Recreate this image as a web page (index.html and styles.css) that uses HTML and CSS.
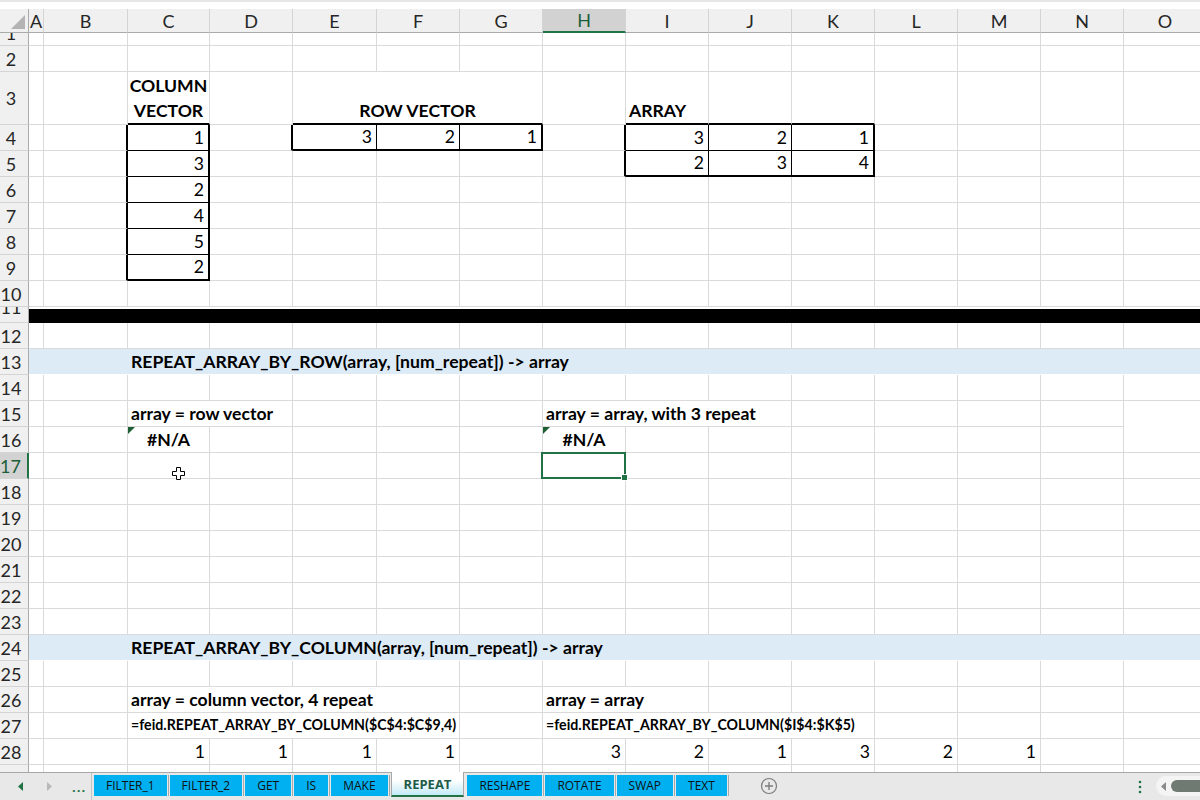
FILE: index.html
```html
<!DOCTYPE html>
<html lang="en">
<head>
  <meta charset="UTF-8" />
  <title>REPEAT - feid</title>
  <link rel="stylesheet" href="styles.css">
</head>
<body>

<div class="window">
  <div class="topstrip"></div>

  <div class="sheet">
    <div class="row colhead">
      <div class="corner"><svg width="16" height="16" viewBox="0 0 16 16"><polygon points="15,1 15,15 1,15" fill="#b4b4b4"/></svg></div>
      <div>A</div><div>B</div><div>C</div><div>D</div><div>E</div><div>F</div><div>G</div>
      <div class="on">H</div><div>I</div><div>J</div><div>K</div><div>L</div><div>M</div><div>N</div><div>O</div>
    </div>

    <div class="row r-thin"><div class="h cut">1</div><div></div><div></div><div></div><div></div><div></div><div></div><div></div><div></div><div></div><div></div><div></div><div></div><div></div><div></div><div></div></div>
    <div class="row"><div class="h">2</div><div></div><div></div><div></div><div></div><div></div><div></div><div></div><div></div><div></div><div></div><div></div><div></div><div></div><div></div><div></div></div>
    <div class="row r-tall">
      <div class="h">3</div><div></div><div></div>
      <div class="t mid wrap bb">COLUMN VECTOR</div>
      <div></div>
      <div class="t mid span3 bb">ROW VECTOR</div>
      <div></div>
      <div class="t bb">ARRAY</div><div class="bb"></div><div class="bb"></div>
      <div></div><div></div><div></div><div></div>
    </div>
    <div class="row">
      <div class="h">4</div><div></div><div class="rb"></div>
      <div class="n rb b1">1</div>
      <div class="rb"></div>
      <div class="n r1 bb">3</div><div class="n r1 bb">2</div><div class="n rb bb">1</div>
      <div class="rb"></div>
      <div class="n r1 b1">3</div><div class="n r1 b1">2</div><div class="n rb b1">1</div>
      <div></div><div></div><div></div><div></div>
    </div>
    <div class="row">
      <div class="h">5</div><div></div><div class="rb"></div>
      <div class="n rb b1">3</div>
      <div></div><div></div><div></div><div></div>
      <div class="rb"></div>
      <div class="n r1 bb">2</div><div class="n r1 bb">3</div><div class="n rb bb">4</div>
      <div></div><div></div><div></div><div></div>
    </div>
    <div class="row"><div class="h">6</div><div></div><div class="rb"></div><div class="n rb b1">2</div><div></div><div></div><div></div><div></div><div></div><div></div><div></div><div></div><div></div><div></div><div></div><div></div></div>
    <div class="row"><div class="h">7</div><div></div><div class="rb"></div><div class="n rb b1">4</div><div></div><div></div><div></div><div></div><div></div><div></div><div></div><div></div><div></div><div></div><div></div><div></div></div>
    <div class="row"><div class="h">8</div><div></div><div class="rb"></div><div class="n rb b1">5</div><div></div><div></div><div></div><div></div><div></div><div></div><div></div><div></div><div></div><div></div><div></div><div></div></div>
    <div class="row"><div class="h">9</div><div></div><div class="rb"></div><div class="n rb bb">2</div><div></div><div></div><div></div><div></div><div></div><div></div><div></div><div></div><div></div><div></div><div></div><div></div></div>
    <div class="row"><div class="h">10</div><div></div><div></div><div></div><div></div><div></div><div></div><div></div><div></div><div></div><div></div><div></div><div></div><div></div><div></div><div></div></div>

    <div class="row r-band"><div class="h cut">11</div><div class="band"></div></div>

    <div class="row"><div class="h">12</div><div></div><div></div><div></div><div></div><div></div><div></div><div></div><div></div><div></div><div></div><div></div><div></div><div></div><div></div><div></div></div>
    <div class="row"><div class="h">13</div><div class="title">REPEAT_ARRAY_BY_ROW(array, [num_repeat]) -&gt; array</div></div>
    <div class="row"><div class="h">14</div><div></div><div></div><div></div><div></div><div></div><div></div><div></div><div></div><div></div><div></div><div></div><div></div><div></div><div></div><div></div></div>
    <div class="row">
      <div class="h">15</div><div></div><div></div>
      <div class="t span2">array = row vector</div>
      <div></div><div></div><div></div>
      <div class="t span3">array = array, with 3 repeat</div>
      <div></div><div></div><div></div><div></div>
    </div>
    <div class="row">
      <div class="h">16</div><div></div><div></div>
      <div class="t mid err">#N/A</div>
      <div></div><div></div><div></div><div></div>
      <div class="t mid err">#N/A</div>
      <div></div><div></div><div></div><div></div><div></div><div></div><div></div>
    </div>
    <div class="row">
      <div class="h on">17</div><div></div><div></div>
      <div class="pointer">
        <svg class="cursor" width="13" height="13" viewBox="0 0 13 13"><path d="M4.5 0.5h4v4h4v4h-4v4h-4v-4h-4v-4h4z" fill="#fff" stroke="#000"/></svg>
      </div>
      <div></div><div></div><div></div><div></div>
      <div class="sel"></div>
      <div></div><div></div><div></div><div></div><div></div><div></div><div></div>
    </div>
    <div class="row"><div class="h">18</div><div></div><div></div><div></div><div></div><div></div><div></div><div></div><div></div><div></div><div></div><div></div><div></div><div></div><div></div><div></div></div>
    <div class="row"><div class="h">19</div><div></div><div></div><div></div><div></div><div></div><div></div><div></div><div></div><div></div><div></div><div></div><div></div><div></div><div></div><div></div></div>
    <div class="row"><div class="h">20</div><div></div><div></div><div></div><div></div><div></div><div></div><div></div><div></div><div></div><div></div><div></div><div></div><div></div><div></div><div></div></div>
    <div class="row"><div class="h">21</div><div></div><div></div><div></div><div></div><div></div><div></div><div></div><div></div><div></div><div></div><div></div><div></div><div></div><div></div><div></div></div>
    <div class="row"><div class="h">22</div><div></div><div></div><div></div><div></div><div></div><div></div><div></div><div></div><div></div><div></div><div></div><div></div><div></div><div></div><div></div></div>
    <div class="row"><div class="h">23</div><div></div><div></div><div></div><div></div><div></div><div></div><div></div><div></div><div></div><div></div><div></div><div></div><div></div><div></div><div></div></div>
    <div class="row"><div class="h">24</div><div class="title">REPEAT_ARRAY_BY_COLUMN(array, [num_repeat]) -&gt; array</div></div>
    <div class="row"><div class="h">25</div><div></div><div></div><div></div><div></div><div></div><div></div><div></div><div></div><div></div><div></div><div></div><div></div><div></div><div></div><div></div></div>
    <div class="row">
      <div class="h">26</div><div></div><div></div>
      <div class="t span4">array = column vector, 4 repeat</div>
      <div></div>
      <div class="t span2">array = array</div>
      <div></div><div></div><div></div><div></div><div></div><div></div>
    </div>
    <div class="row">
      <div class="h">27</div><div></div><div></div>
      <div class="t f span4">=feid.REPEAT_ARRAY_BY_COLUMN($C$4:$C$9,4)</div>
      <div></div>
      <div class="t f span4">=feid.REPEAT_ARRAY_BY_COLUMN($I$4:$K$5)</div>
      <div></div><div></div><div></div><div></div>
    </div>
    <div class="row">
      <div class="h">28</div><div></div><div></div>
      <div class="n">1</div><div class="n">1</div><div class="n">1</div><div class="n">1</div>
      <div></div>
      <div class="n">3</div><div class="n">2</div><div class="n">1</div><div class="n">3</div><div class="n">2</div><div class="n">1</div>
      <div></div><div></div>
    </div>
    <div class="row"><div class="h">29</div><div></div><div></div><div></div><div></div><div></div><div></div><div></div><div></div><div></div><div></div><div></div><div></div><div></div><div></div><div></div></div>
  </div>

  <div class="tabbar">
    <div class="nav">
      <svg width="6" height="9" viewBox="0 0 6 9"><polygon points="5,0 5,9 0,4.5" fill="#217346"/></svg>
      <svg width="6" height="9" viewBox="0 0 6 9"><polygon points="0,0 0,9 5,4.5" fill="#b9b9b9"/></svg>
      <span class="more">...</span>
    </div>
    <div class="tabs">
      <div class="tab">FILTER_1</div>
      <div class="tab">FILTER_2</div>
      <div class="tab">GET</div>
      <div class="tab">IS</div>
      <div class="tab">MAKE</div>
      <div class="tab active">REPEAT</div>
      <div class="tab">RESHAPE</div>
      <div class="tab">ROTATE</div>
      <div class="tab">SWAP</div>
      <div class="tab">TEXT</div>
    </div>
    <div class="add">
      <svg width="18" height="18" viewBox="0 0 18 18"><circle cx="9" cy="9" r="7.5" fill="none" stroke="#7b7b7b" stroke-width="1.2"/><path d="M9 5v8M5 9h8" stroke="#7b7b7b" stroke-width="1.3"/></svg>
    </div>
    <div class="spacer"></div>
    <div class="dots">
      <svg width="4" height="14" viewBox="0 0 4 14"><circle cx="2" cy="2" r="1.3" fill="#217346"/><circle cx="2" cy="7" r="1.3" fill="#217346"/><circle cx="2" cy="12" r="1.3" fill="#217346"/></svg>
    </div>
    <div class="hscroll">
      <svg width="6" height="9" viewBox="0 0 6 9"><polygon points="5,0 5,9 0,4.5" fill="#8a8a8a"/></svg>
      <div class="thumb"></div>
    </div>
  </div>
</div>

</body>
</html>
```

FILE: styles.css
```css
body {
  margin: 0;
  background: #ffffff;
  font-family: Lato, 'Liberation Sans', sans-serif;
  color: #000;
}

.window {
  width: 1200px;
  height: 800px;
  display: flex;
  flex-direction: column;
  overflow: hidden;
}

.topstrip {
  height: 9px;
  flex: none;
  background: #ffffff;
  border-top: 2px solid #e6e6e6;
  box-sizing: border-box;
}

.sheet {
  height: 763px;
  flex: none;
  overflow: hidden;
}

/* one spreadsheet row: row header + columns A..O */
.row {
  display: grid;
  grid-template-columns: 29px 15px 84px 82px 83px 84px 83px 83px 83px 83px 83px 83px 83px 83px 83px 83px;
  height: 26px;
}

.row > div {
  box-sizing: border-box;
  border-right: 1px solid #dadada;
  border-bottom: 1px solid #dadada;
  display: flex;
  align-items: flex-end;
  min-width: 0;
  white-space: nowrap;
  font-size: 17.6px;
  line-height: 20px;
  padding-bottom: 2px;
}

.r-thin { height: 13px; }
.r-tall { height: 53px; }
.r-band { height: 16px; }

/* column letters */
.colhead {
  height: 24px;
}

.colhead > div {
  background: #f0f0f0;
  border-right: 1px solid #d4d4d4;
  border-bottom: 1px solid #ababab;
  justify-content: center;
  align-items: center;
  padding-bottom: 0;
  font-size: 18px;
  color: #262626;
}

.colhead > .corner {
  justify-content: flex-end;
  align-items: flex-end;
  padding: 0 2px 2px 0;
  border-right-color: #ababab;
}

.colhead > .on {
  background: #d2d2d2;
  border-bottom: 2px solid #217346;
  color: #1b5e3a;
}

/* row numbers */
.row > .h {
  background: #f0f0f0;
  border-right: 1px solid #ababab;
  border-bottom: 1px solid #d4d4d4;
  justify-content: center;
  align-items: center;
  padding: 0 6px 0 0;
  font-size: 18px;
  color: #262626;
  overflow: hidden;
}

.row > .h.cut {
  align-items: flex-start;
  line-height: 1px;
}

.row > .h.on {
  background: #d2d2d2;
  border-right: 2px solid #217346;
  color: #1b5e3a;
}

/* cell content */
.n {
  justify-content: flex-end;
  padding-right: 4px;
}

.t {
  font-weight: bold;
  padding-left: 3px;
}

.mid {
  justify-content: center;
  padding-left: 0;
  text-align: center;
}

.row > .wrap {
  white-space: normal;
  line-height: 25px;
  padding-bottom: 0;
}

.row > .f {
  font-size: 14.2px;
  padding-bottom: 3px;
}

.span2 { grid-column: span 2; }
.span3 { grid-column: span 3; }
.span4 { grid-column: span 4; }

/* table borders */
.row > .rb { border-right: 2px solid #000; }
.row > .r1 { border-right: 1px solid #000; }
.row > .bb { border-bottom: 2px solid #000; }
.row > .b1 { border-bottom: 1px solid #000; }

.row > .band {
  grid-column: span 15;
  background: #000;
  border-top: 2px solid #ffffff;
  border-right: none;
  border-bottom: 1px solid #000;
}

.row > .title {
  grid-column: span 15;
  background: #ddebf7;
  border-right: none;
  border-bottom-color: #ffffff;
  font-weight: bold;
  padding-left: 102px;
}

/* error indicator */
.err {
  position: relative;
}

.err::before {
  content: "";
  position: absolute;
  top: 0;
  left: 0;
  border-top: 7px solid #1d5f32;
  border-right: 7px solid transparent;
}

.pointer {
  position: relative;
}

.cursor {
  position: absolute;
  left: 44px;
  top: 14px;
}

.sel {
  position: relative;
}

.sel::after {
  content: "";
  position: absolute;
  left: -2px;
  top: -1px;
  right: -1px;
  bottom: -1px;
  border: 2px solid #217346;
}

.sel::before {
  content: "";
  position: absolute;
  right: -3px;
  bottom: -3px;
  width: 5px;
  height: 5px;
  background: #217346;
  border: 1px solid #fff;
  z-index: 1;
}

/* sheet tabs */
.tabbar {
  flex: none;
  height: 28px;
  box-sizing: border-box;
  border-top: 1px solid #a8a8a8;
  background: #e8e8e8;
  display: flex;
  align-items: flex-start;
  font-family: 'Open Sans', 'Liberation Sans', sans-serif;
  font-size: 12px;
}

.nav {
  width: 92px;
  height: 27px;
  box-sizing: border-box;
  border-right: 1px solid #c4c4c4;
  display: flex;
  align-items: center;
  padding-left: 18px;
  gap: 23px;
}

.nav .more {
  color: #217346;
  font-weight: bold;
  font-size: 13px;
  margin-left: -4px;
  letter-spacing: 1px;
}

.tabs {
  display: flex;
  align-items: flex-start;
  margin-left: 2px;
  gap: 3px;
}

.tab {
  height: 21px;
  margin-top: 2px;
  padding: 0 12px;
  background: #00b0f0;
  display: flex;
  align-items: center;
  color: #111;
  box-shadow: 1px 0 0 #e8e8e8, 2px 0 0 #a8a8a8;
}

.tab.active {
  height: 25px;
  margin-top: -1px;
  padding: 0 12px;
  background: linear-gradient(#ffffff 35%, #c3eaf7);
  border-left: 1px solid #a8a8a8;
  border-right: 1px solid #a8a8a8;
  border-bottom: 2px solid #217346;
  box-sizing: border-box;
  color: #1e5c48;
  font-size: 13px;
  font-weight: bold;
  box-shadow: none;
}

.add {
  margin: 4px 0 0 33px;
}

.spacer {
  flex: 1;
}

.dots {
  margin: 7px 14px 0 0;
}

.hscroll {
  width: 44px;
  height: 20px;
  margin-top: 3px;
  border-radius: 10px 0 0 10px;
  background: #f4f4f4;
  display: flex;
  align-items: center;
  padding-left: 5px;
  gap: 4px;
  box-sizing: border-box;
}

.thumb {
  flex: 1;
  height: 12px;
  border-radius: 6px 0 0 6px;
  background: #6f7a72;
}
```
